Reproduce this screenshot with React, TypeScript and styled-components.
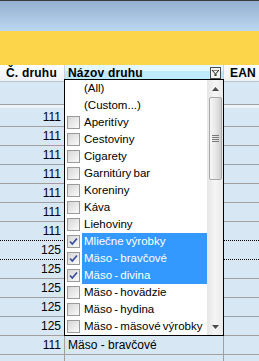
import React from "react";
import styled, { createGlobalStyle } from "styled-components";

const GlobalStyle = createGlobalStyle`
  html, body {
    margin: 0;
    padding: 0;
    overflow: hidden;
    background: #d8e7f4;
  }
  body {
    font-family: "Liberation Sans", Arial, sans-serif;
    font-size: 12px;
  }
`;

const Screen = styled.div`
  position: relative;
  width: 259px;
  height: 361px;
  overflow: hidden;
  background: #d8e7f4;
`;

const TitleBand = styled.div`
  height: 30px;
  border-top: 1px solid #3a3a3a;
  background: linear-gradient(#94afd0, #bcd7ef);
`;

const YellowBand = styled.div`
  height: 34px;
  background: #fdd54a;
`;

const Row = styled.div<{ $h: number }>`
  display: grid;
  grid-template-columns: 64px 1px 158px 1px 1fr;
  height: ${(p) => p.$h}px;
`;

const HeaderRow = styled(Row)`
  background: linear-gradient(#ffffff, #eef1f4);
  border-bottom: 1px solid #b8c4cf;
`;

const HeadCell = styled.div<{ $active?: boolean }>`
  display: flex;
  align-items: flex-end;
  padding-left: ${(p) => (p.$active ? 3 : 6)}px;
  padding-bottom: 1px;
  font-weight: bold;
  letter-spacing: 0.2px;
  color: #000;
  position: relative;
  background: ${(p) =>
    p.$active ? "linear-gradient(#e2f7fe 0 40%, #bfeafa 40%)" : "transparent"};
`;

const VLine = styled.div<{ $c?: string }>`
  background: ${(p) => p.$c ?? "#a0a0a0"};
`;

const FilterIcon = styled.div`
  position: absolute;
  right: 2px;
  top: 2px;
  width: 9px;
  height: 10px;
  border: 1px solid #4a4a4a;
  background: #f2f2f2;
  display: flex;
  align-items: center;
  justify-content: center;
`;

const FilterRow = styled(Row)`
  background: #d8e7f4;
  border-bottom: 1px solid #a0a0a0;
`;

const Gap = styled.div`
  height: 3px;
  background: #eef3f8;
`;

const DataRow = styled(Row)<{ $dotted?: boolean }>`
  box-sizing: border-box;
  border-bottom: 1px ${(p) => (p.$dotted ? "dotted #000" : "solid #a0a0a0")};
`;

const NumCell = styled.div`
  display: flex;
  align-items: center;
  justify-content: flex-end;
  padding-right: 3px;
  color: #000;
`;

const TextCell = styled.div`
  display: flex;
  align-items: center;
  padding-left: 3px;
  color: #000;
  white-space: nowrap;
`;

const Popup = styled.div`
  position: absolute;
  left: 64px;
  top: 79px;
  width: 158px;
  height: 255px;
  border: 1px solid #000;
  background: #fff;
  display: flex;
`;

const List = styled.div`
  flex: 1;
  display: flex;
  flex-direction: column;
  overflow: hidden;
`;

const Item = styled.div`
  height: 17px;
  display: flex;
  align-items: center;
  padding-left: 2px;
  white-space: nowrap;
`;

const Box = styled.div`
  width: 11px;
  height: 11px;
  border: 1px solid #9a9a9a;
  background: linear-gradient(135deg, #d6d6d6, #fbfbfb);
  display: flex;
  align-items: center;
  justify-content: center;
  flex: none;
`;

const Label = styled.div<{ $sel?: boolean }>`
  margin-left: 2px;
  padding-left: 2px;
  height: 17px;
  line-height: 17px;
  flex: 1;
  font-size: 11.5px;
  word-spacing: -1px;
  color: ${(p) => (p.$sel ? "#fff" : "#000")};
  background: ${(p) => (p.$sel ? "#3399ff" : "transparent")};
`;

const Spacer = styled.div`
  width: 13px;
  flex: none;
`;

const Scroll = styled.div`
  width: 16px;
  flex: none;
  background: linear-gradient(90deg, #e6e6e6, #f5f5f5 50%, #e9e9e9);
  display: flex;
  flex-direction: column;
  align-items: center;
`;

const Arrow = styled.div`
  height: 17px;
  width: 16px;
  display: flex;
  align-items: center;
  justify-content: center;
`;

const Thumb = styled.div`
  width: 13px;
  height: 83px;
  box-sizing: border-box;
  border: 1px solid #a9a9a9;
  border-radius: 2px;
  background: linear-gradient(90deg, #f7f7f7, #e8e8e8 50%, #cfcfcf);
  display: flex;
  align-items: center;
  justify-content: center;
`;

const Track = styled.div`
  flex: 1;
`;

const Check = () => (
  <svg width="11" height="11" viewBox="0 0 11 11">
    <path
      d="M2 5.5 L4.3 8 L9 2.5"
      fill="none"
      stroke="#3b4c9c"
      strokeWidth="1.7"
    />
  </svg>
);

const Tri = ({ up }: { up?: boolean }) => (
  <svg width="7" height="4" viewBox="0 0 7 4">
    <path d={up ? "M3.5 0 L7 4 L0 4 Z" : "M0 0 L7 0 L3.5 4 Z"} fill="#4a4a4a" />
  </svg>
);

const Grip = () => (
  <svg width="7" height="7" viewBox="0 0 7 7">
    {[0, 2, 4, 6].map((y) => (
      <rect key={y} x="0" y={y} width="7" height="1" fill="#7a7a7a" />
    ))}
  </svg>
);

type Entry = { text: string; box?: boolean; checked?: boolean };

const entries: Entry[] = [
  { text: "(All)" },
  { text: "(Custom...)" },
  { text: "Aperitívy", box: true },
  { text: "Cestoviny", box: true },
  { text: "Cigarety", box: true },
  { text: "Garnitúry bar", box: true },
  { text: "Koreniny", box: true },
  { text: "Káva", box: true },
  { text: "Liehoviny", box: true },
  { text: "Mliečne výrobky", box: true, checked: true },
  { text: "Mäso - bravčové", box: true, checked: true },
  { text: "Mäso - divina", box: true, checked: true },
  { text: "Mäso - hovädzie", box: true },
  { text: "Mäso - hydina", box: true },
  { text: "Mäso - mäsové výrobky", box: true },
];

const rows = [
  { n: "111" }, { n: "111" }, { n: "111" }, { n: "111" }, { n: "111" },
  { n: "111" }, { n: "111", dotted: true }, { n: "125", dotted: true },
  { n: "125" }, { n: "125" }, { n: "125" }, { n: "125" },
  { n: "111", name: "Mäso - bravčové" }, { n: "" },
];

export default function App() {
  return (
    <Screen>
      <GlobalStyle />
      <TitleBand />
      <YellowBand />
      <HeaderRow $h={16}>
        <HeadCell>Č. druhu</HeadCell>
        <VLine $c="#c9d3dc" />
        <HeadCell $active>
          Názov druhu
          <FilterIcon>
            <svg width="7" height="6" viewBox="0 0 7 6">
              <path d="M0 0 H7 L4 3.5 V6 H3 V3.5 Z" fill="none" stroke="#222" strokeWidth="1" />
            </svg>
          </FilterIcon>
        </HeadCell>
        <VLine $c="#c9d3dc" />
        <HeadCell>EAN</HeadCell>
      </HeaderRow>
      <FilterRow $h={22}>
        <div />
        <VLine />
        <div />
        <VLine />
        <div />
      </FilterRow>
      <Gap />
      {rows.map((r, i) => (
        <DataRow key={i} $h={19} $dotted={r.dotted}>
          <NumCell>{r.n}</NumCell>
          <VLine />
          <TextCell>{r.name ?? ""}</TextCell>
          <VLine />
          <div />
        </DataRow>
      ))}
      <Popup>
        <List>
          {entries.map((e) => (
            <Item key={e.text}>
              {e.box ? <Box>{e.checked && <Check />}</Box> : <Spacer />}
              <Label $sel={e.checked}>{e.text}</Label>
            </Item>
          ))}
        </List>
        <Scroll>
          <Arrow>
            <Tri up />
          </Arrow>
          <Thumb>
            <Grip />
          </Thumb>
          <Track />
          <Arrow>
            <Tri />
          </Arrow>
        </Scroll>
      </Popup>
    </Screen>
  );
}
